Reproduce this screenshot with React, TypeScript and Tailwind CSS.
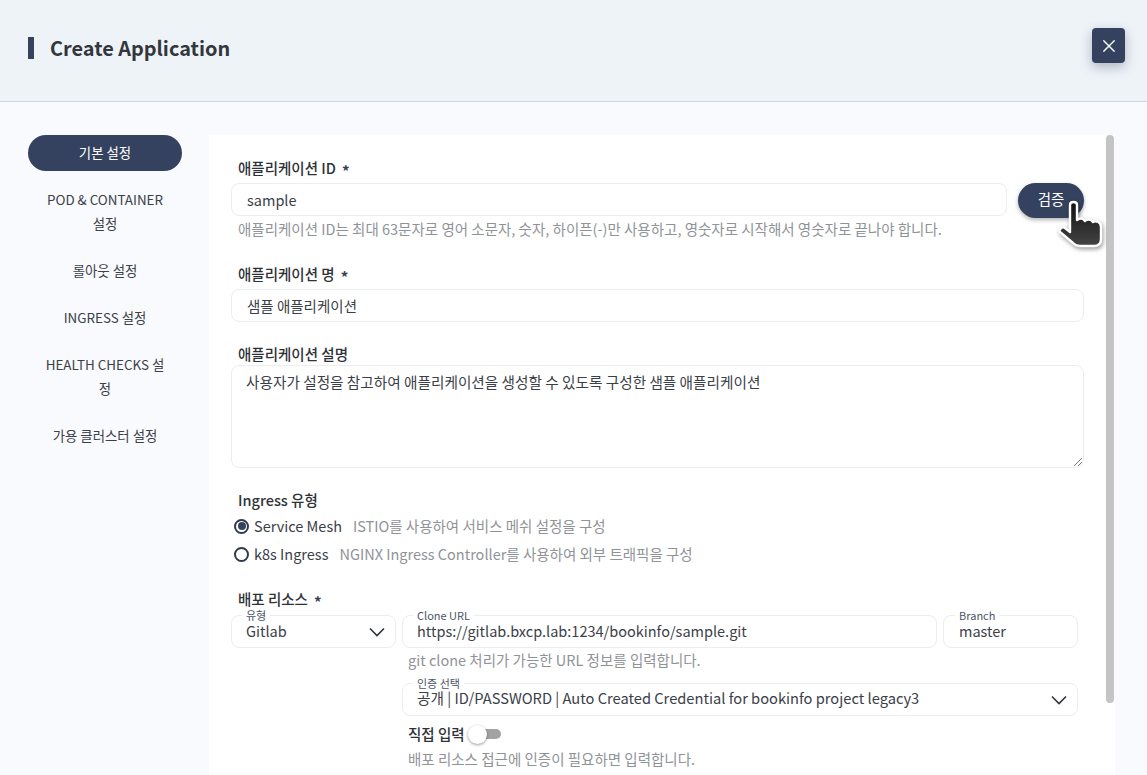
import React from "react";

const F = "[font-family:'Noto_Sans_CJK_KR','Noto_Sans',sans-serif]";

function Chevron({ className = "" }: { className?: string }) {
  return (
    <svg width="16" height="10" viewBox="0 0 16 10" fill="none" className={className}>
      <path d="M1 1.5 L8 8.5 L15 1.5" stroke="#2f343b" strokeWidth="1.6" />
    </svg>
  );
}

function Label({ children, star }: { children: React.ReactNode; star?: boolean }) {
  return (
    <div className="ml-[7px] h-[18px] flex items-center text-[14.5px] leading-[18px] font-medium text-[#2e3238]">
      <span>{children}</span>
      {star && <span className="ml-[6px] text-[15px] font-bold translate-y-[3px] text-[#3a4150]">*</span>}
    </div>
  );
}

function Help({ children, className = "" }: { children: React.ReactNode; className?: string }) {
  return <div className={`text-[14.5px] leading-[20px] text-[#8f9398] ${className}`}>{children}</div>;
}

function Box({ children, className = "" }: { children?: React.ReactNode; className?: string }) {
  return (
    <div className={`h-[33px] rounded-[8px] border border-[#ebedef] bg-white flex items-center pt-[1px] text-[14.5px] text-[#3b4048] ${className}`}>
      {children}
    </div>
  );
}

function Outlined({
  legend,
  value,
  className = "",
  legendClass = "left-[10px]",
  valueClass = "text-[14.5px] -translate-y-[1px]",
  chevron,
}: {
  legend: string;
  value: string;
  className?: string;
  legendClass?: string;
  valueClass?: string;
  chevron?: boolean;
}) {
  return (
    <div className={`relative h-[33px] rounded-[8px] border border-[#ebedef] bg-white flex items-center justify-between text-[#3b4048] ${className}`}>
      <span className={`absolute top-[-7px] px-[4px] bg-white text-[11px] leading-[12px] text-[#4a5568] ${legendClass}`}>{legend}</span>
      <span className={`whitespace-nowrap leading-[18px] ${valueClass}`}>{value}</span>
      {chevron && <Chevron />}
    </div>
  );
}

function Radio({ on }: { on?: boolean }) {
  return (
    <span className="w-[15px] h-[15px] rounded-full border-2 border-[#2e3a4f] flex items-center justify-center shrink-0">
      {on && <span className="w-[8px] h-[8px] rounded-full bg-[#35425f]" />}
    </span>
  );
}

export default function App() {
  const side = [
    ["기본 설정"],
    ["POD & CONTAINER", "설정"],
    ["롤아웃 설정"],
    ["INGRESS 설정"],
    ["HEALTH CHECKS 설", "정"],
    ["가용 클러스터 설정"],
  ];
  return (
    <div className={`${F} w-[1147px] h-[775px] overflow-hidden bg-[#f9fafd] flex flex-col`}>
      <header className="h-[102px] shrink-0 bg-[#eef3f8] border-b border-[#d1d6dd] flex items-start justify-between pl-[28px] pr-[22px]">
        <div className="flex items-center mt-[37px] h-[22px]">
          <span className="w-[6px] h-[22px] bg-[#35425f]" />
          <h1 className="ml-[16px] text-[19.9px] leading-[22px] font-bold text-[#33373d]">Create Application</h1>
        </div>
        <button className="mt-[28px] w-[33px] h-[35px] rounded-[4px] bg-[#35425f] shadow-[0_4px_12px_rgba(53,66,95,0.35)] flex items-center justify-center">
          <svg width="12" height="12" viewBox="0 0 12 12" fill="none">
            <path d="M0.4 0.4 L11.6 11.6 M11.6 0.4 L0.4 11.6" stroke="#fff" strokeWidth="1.4" />
          </svg>
        </button>
      </header>

      <div className="flex-1 flex pl-[28px] pt-[33px] min-h-0">
        <nav className="w-[154px] shrink-0 flex flex-col text-[13.4px] leading-[24px] text-[#3b4048] text-center">
          {side.map((lines, i) => (
            <div
              key={i}
              className={
                i === 0
                  ? "h-[36px] rounded-full bg-[#35425f] text-white flex items-center justify-center pb-[2px] mb-[10px]"
                  : "py-[6px] mb-[11px]"
              }
            >
              {lines.map((l) => (
                <div key={l} className="whitespace-nowrap">{l}</div>
              ))}
            </div>
          ))}
        </nav>

        <main className="relative ml-[27px] w-[906px] bg-white pl-[22px] pr-[31px] pt-[24px] overflow-hidden">
          <div className="absolute right-[1px] top-0 w-[8px] h-[568px] rounded-[4px] bg-[#c4c4c4]" />

          <Label star>애플리케이션 ID</Label>
          <div className="flex mt-[6px] items-start">
            <Box className="w-[776px] pl-[15px]">sample</Box>
            <button className="ml-[11px] w-[66px] h-[35px] pb-[4px] rounded-full bg-[#35425f] text-white text-[14.5px] shadow-[0_2px_4px_rgba(0,0,0,0.3)]">검증</button>
          </div>
          <Help className="ml-[7px] mt-[1px]">애플리케이션 ID는 최대 63문자로 영어 소문자, 숫자, 하이픈(-)만 사용하고, 영숫자로 시작해서 영숫자로 끝나야 합니다.</Help>

          <div className="mt-[26px]"><Label star>애플리케이션 명</Label></div>
          <Box className="mt-[6px] pl-[15px]">샘플 애플리케이션</Box>

          <div className="mt-[23px]"><Label>애플리케이션 설명</Label></div>
          <div className="mt-[2px] h-[103px] rounded-[8px] border border-[#ebedef] pl-[14px] pt-[6px] text-[14.65px] leading-[20px] text-[#3b4048] relative">
            사용자가 설정을 참고하여 애플리케이션을 생성할 수 있도록 구성한 샘플 애플리케이션
            <svg className="absolute right-[1px] bottom-[1px]" width="8" height="8" viewBox="0 0 8 8">
              <path d="M0 8 L8 0 M4 8 L8 4" stroke="#555" strokeWidth="0.8" />
            </svg>
          </div>

          <div className="mt-[23px]"><Label>Ingress 유형</Label></div>
          <div className="mt-[7px] ml-[3px] h-[20px] flex items-center text-[14.5px]">
            <Radio on />
            <span className="ml-[5px] text-[#3b4048]">Service Mesh</span>
            <span className="ml-[11px] text-[#8f9398]">ISTIO를 사용하여 서비스 메쉬 설정을 구성</span>
          </div>
          <div className="mt-[8px] ml-[3px] h-[20px] flex items-center text-[14.5px]">
            <Radio />
            <span className="ml-[5px] text-[#3b4048]">k8s Ingress</span>
            <span className="ml-[11px] text-[#8f9398]">NGINX Ingress Controller를 사용하여 외부 트래픽을 구성</span>
          </div>

          <div className="mt-[26px]"><Label star>배포 리소스</Label></div>
          <div className="mt-[7px] flex items-start">
            <Outlined legend="유형" value="Gitlab" chevron className="w-[165px] pl-[14px] pr-[10px]" />
            <div className="ml-[6px] w-[676px]">
              <div className="flex gap-[6px]">
                <Outlined legend="Clone URL" value="https://gitlab.bxcp.lab:1234/bookinfo/sample.git" className="w-[535px] pl-[14px] pr-[8px]" />
                <Outlined legend="Branch" value="master" legendClass="left-[11px]" className="w-[135px] pl-[15px] pr-[8px]" />
              </div>
              <Help className="ml-[6px] mt-[2px]">git clone 처리가 가능한 URL 정보를 입력합니다.</Help>
              <Outlined
                legend="인증 선택"
                value="공개 | ID/PASSWORD | Auto Created Credential for bookinfo project legacy3"
                valueClass="text-[14.67px] -translate-y-[2px]"
                chevron
                className="mt-[13px] pl-[14px] pr-[10px]"
              />
              <div className="ml-[6px] mt-[8px] h-[20px] flex items-center">
                <span className="text-[14.5px] font-medium text-[#2e3238]">직접 입력</span>
                <span className="relative ml-[6px] w-[30px] h-[10px] rounded-full bg-[#a3a3a3]">
                  <span className="absolute left-[-3px] top-[-4px] w-[19px] h-[19px] rounded-full bg-white shadow-[0_1px_3px_rgba(0,0,0,0.4)]" />
                </span>
              </div>
              <Help className="ml-[6px] mt-[5px]">배포 리소스 접근에 인증이 필요하면 입력합니다.</Help>
            </div>
          </div>

          <svg className="absolute left-[847px] top-[63px]" width="52" height="56" viewBox="0 0 52 56">
            <defs>
              <linearGradient id="h" x1="0" y1="0" x2="0" y2="1">
                <stop offset="0" stopColor="#111" />
                <stop offset="1" stopColor="#444" />
              </linearGradient>
            </defs>
            <path
              d="M14 7 C14 3 21 3 21 7 L21 22 C24 20 27 20 29 23 C31 21 35 21 37 24 C40 22 45 24 45 29 L45 41 C45 46 42 48 38 48 L24 48 C21 48 19 47 17 45 L4 34 C2 32 6 28 9 30 L14 34 Z"
              fill="url(#h)"
              stroke="#fff"
              strokeWidth="2.4"
              strokeLinejoin="round"
              style={{ filter: "drop-shadow(1px 2px 2px rgba(0,0,0,.4))" }}
            />
          </svg>
        </main>
      </div>
    </div>
  );
}
